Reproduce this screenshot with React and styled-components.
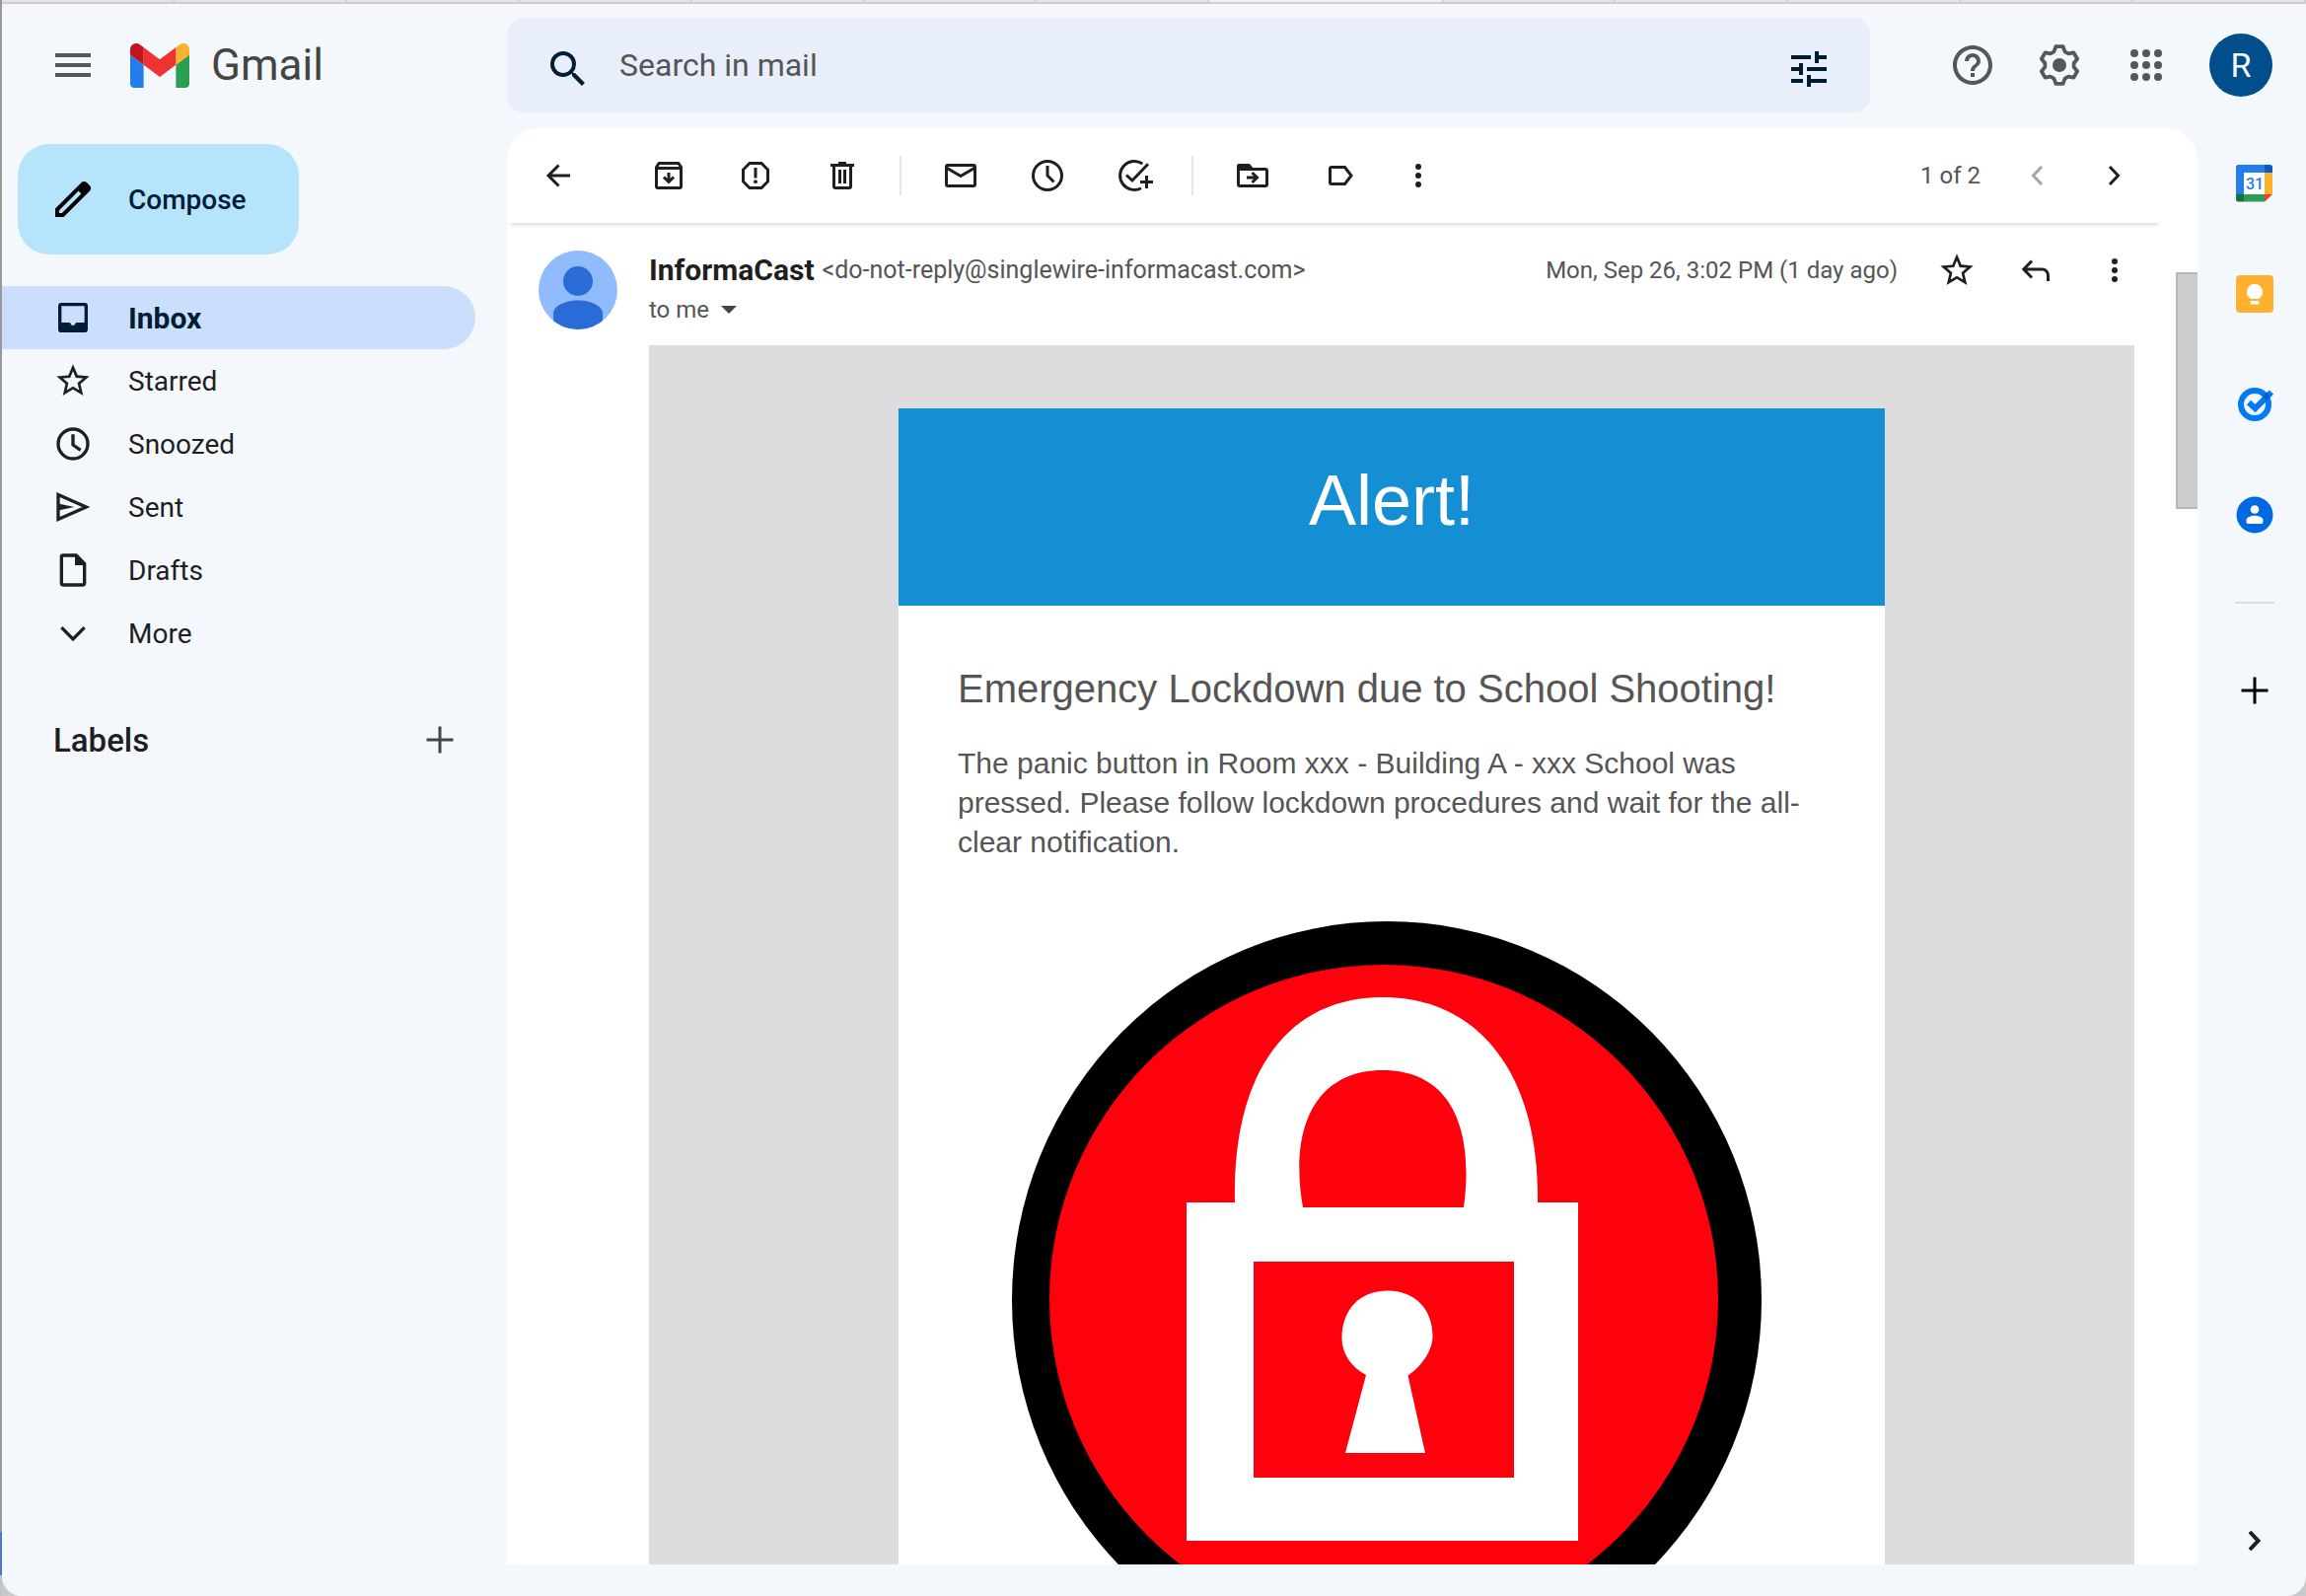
import React from "react";
import styled, { createGlobalStyle } from "styled-components";
import { MdHelpOutline, MdMenu, MdSearch, MdTune } from "react-icons/md";

const color = {
  canvas: "#f4f8fd",
  ink: "#1f1f1f",
  navy: "#001d35",
  muted: "#555555",
  icon: "#55575c",
  line: "#e4e4e9",
};

const GlobalStyle = createGlobalStyle`
  *, *::before, *::after { box-sizing: border-box; }
  body {
    margin: 0;
    background: #c9c9c9;
    font-family: Roboto, "Liberation Sans", sans-serif;
    color: ${color.ink};
  }
  button {
    margin: 0;
    padding: 0;
    border: 0;
    background: none;
    font: inherit;
    color: inherit;
    cursor: pointer;
  }
  a { color: inherit; text-decoration: none; }
  h1, h2, p, ul { margin: 0; padding: 0; }
  svg { display: block; flex: none; }
`;

/* ---------- window ---------- */

const Desktop = styled.div`
  height: 100vh;
  padding-left: 2px;
  display: flex;
  flex-direction: column;
  background: linear-gradient(#999999 0 96%, #5478bc 96% 98.7%, #c4c4c4 98.7%);
`;

const TabStrip = styled.div`
  display: flex;
  height: 4px;
  flex: none;
  border-bottom: 2px solid #cfcdd3;
`;

const Tab = styled.div`
  flex: ${(p) => (p.$active ? 1.36 : 1)};
  background: ${(p) => (p.$active ? "#f6f3f8" : "#e6e2e8")};
  border-right: 2px solid #d2cfd5;
`;

const Backdrop = styled.div`
  flex: 1;
  min-height: 0;
  display: flex;
  background: #c9c9c9;
`;

const Window = styled.div`
  flex: 1;
  min-width: 0;
  display: flex;
  flex-direction: column;
  background: ${color.canvas};
  border-radius: 0 0 20px 20px;
  overflow: hidden;
`;

const Header = styled.header`
  display: flex;
  align-items: center;
  flex: none;
  padding: 14px 0 16px;
`;

const Columns = styled.div`
  flex: 1;
  min-height: 0;
  display: flex;
`;

/* ---------- header ---------- */

const Brand = styled.div`
  width: 512px;
  flex: none;
  display: flex;
  align-items: center;
  padding-left: 48px;
`;

const IconButton = styled.button`
  display: flex;
  align-items: center;
  justify-content: center;
  flex: none;
  width: ${(p) => p.$size || 40}px;
  height: ${(p) => p.$size || 40}px;
  color: ${(p) => p.$color || color.ink};
`;

const BrandLink = styled.a`
  display: flex;
  align-items: center;
  gap: 22px;
  margin-left: 34px;
  font-size: 44px;
  line-height: 52px;
  color: #444444;
`;

const SearchBar = styled.form`
  flex: 1;
  min-width: 0;
  height: 96px;
  display: flex;
  align-items: center;
  gap: 28px;
  padding: 0 38px;
  border-radius: 16px;
  background: #e8effa;
`;

const SearchButton = styled(IconButton)`
  height: 56px;
  padding-top: 8px;
`;

const SearchInput = styled.input`
  flex: 1;
  min-width: 0;
  padding: 0;
  border: 0;
  outline: 0;
  background: none;
  font: inherit;
  font-size: 32px;
  line-height: 40px;
  color: ${color.ink};
  &::placeholder { color: ${color.muted}; opacity: 1; }
`;

const HeaderTools = styled.div`
  flex: none;
  display: flex;
  align-items: center;
  gap: 40px;
  padding: 0 34px 0 80px;
`;

const Account = styled.button`
  width: 64px;
  height: 64px;
  border-radius: 50%;
  && { background: #004e8c; color: #ffffff; font-size: 34px; }
`;

/* ---------- sidebar ---------- */

const Sidebar = styled.aside`
  width: 512px;
  flex: none;
  padding: 16px 32px 0 0;
`;

const Compose = styled.button`
  && {
    display: flex;
    align-items: center;
    gap: 32px;
    min-width: 285px;
    height: 112px;
    margin: 0 0 32px 16px;
    padding: 0 48px 0 32px;
    border-radius: 32px;
    background: #b6e4fd;
    color: ${color.navy};
    font-size: 28px;
    font-weight: 500;
  }
`;

const FolderList = styled.ul`
  list-style: none;
`;

const FolderLink = styled.a`
  display: flex;
  align-items: center;
  gap: 36px;
  height: 64px;
  padding-left: 52px;
  border-radius: 0 32px 32px 0;
  font-size: ${(p) => (p.$active ? 30 : 28)}px;
  font-weight: ${(p) => (p.$active ? 700 : 400)};
  color: ${(p) => (p.$active ? color.navy : color.ink)};
  background: ${(p) => (p.$active ? "#cbdefb" : "transparent")};
`;

const LabelsRow = styled.div`
  display: flex;
  align-items: center;
  justify-content: space-between;
  height: 64px;
  margin-top: 44px;
  padding: 0 16px 0 52px;
`;

const LabelsTitle = styled.h2`
  font-size: 33px;
  font-weight: 500;
`;

/* ---------- mail panel ---------- */

const Panel = styled.main`
  position: relative;
  flex: 1;
  min-width: 0;
  margin-bottom: 32px;
  display: flex;
  flex-direction: column;
  background: #ffffff;
  border-radius: 32px 32px 0 0;
  overflow: hidden;
`;

const Toolbar = styled.div`
  flex: none;
  height: 96px;
  margin-right: 36px;
  padding: 0 28px 0 32px;
  display: flex;
  align-items: center;
  box-shadow: 0 6px 4px -4px rgba(0, 0, 0, 0.16);
`;

const ToolGroup = styled.div`
  display: flex;
  align-items: center;
  gap: 48px;
  margin-left: ${(p) => p.$left || 0}px;
`;

const ToolDivider = styled.span`
  width: 2px;
  height: 40px;
  margin: 0 40px 0 38px;
  background: ${color.line};
`;

const Pager = styled.div`
  display: flex;
  align-items: center;
  gap: 38px;
  margin-left: auto;
  font-size: 24px;
  color: ${color.muted};
`;

const Message = styled.article`
  flex: 1;
  min-height: 0;
  display: grid;
  grid-template-columns: 80px minmax(0, 1fr);
  column-gap: 32px;
  padding: 28px 64px 0 32px;
  overflow: hidden;
`;

const MessageMain = styled.div`
  display: flex;
  flex-direction: column;
  min-height: 0;
`;

const MessageHead = styled.div`
  display: flex;
  justify-content: space-between;
  flex: none;
  margin-bottom: 16px;
  font-size: 24px;
  line-height: 40px;
  color: ${color.muted};
`;

const SenderLine = styled.div`
  display: flex;
  align-items: center;
  gap: 8px;
  height: 40px;
`;

const Sender = styled.strong`
  font-size: 30px;
  font-weight: 700;
  color: ${color.ink};
`;

const Address = styled.span`
  font-size: 25px;
`;

const Recipient = styled.button`
  && {
    display: flex;
    align-items: center;
    gap: 12px;
    height: 40px;
    line-height: 40px;
  }
`;

const MessageTools = styled.div`
  display: flex;
  align-items: center;
  gap: 40px;
  height: 40px;
`;

const MailBody = styled.div`
  flex: 1;
  min-height: 0;
  padding-top: 64px;
  background: #dddddd;
  overflow: hidden;
  font-family: "Liberation Sans", Arial, sans-serif;
`;

const Card = styled.section`
  max-width: 1000px;
  margin: 0 auto;
  background: #ffffff;
  color: ${color.muted};
`;

const Banner = styled.h1`
  padding: 48px 0 62px;
  background: #158fd3;
  color: #ffffff;
  text-align: center;
  font-size: 72px;
  font-weight: 400;
  line-height: 90px;
`;

const CardContent = styled.div`
  display: flex;
  flex-direction: column;
  padding: 60px;
`;

const CardTitle = styled.h2`
  margin-bottom: 32px;
  font-size: 40px;
  font-weight: 400;
  line-height: 48px;
`;

const CardText = styled.p`
  margin-bottom: 60px;
  font-size: 30px;
  line-height: 40px;
`;

const ScrollThumb = styled.div`
  position: absolute;
  top: 146px;
  right: 0;
  width: 22px;
  height: 240px;
  background: #cccccc;
  border: 2px solid #b6b6b6;
  border-right: 0;
`;

/* ---------- side rail ---------- */

const Rail = styled.nav`
  width: 110px;
  flex: none;
  display: flex;
  flex-direction: column;
  align-items: center;
  padding: 36px 0 36px 6px;
`;

const RailApps = styled.div`
  display: flex;
  flex-direction: column;
  gap: 72px;
`;

const RailDivider = styled.span`
  width: 40px;
  height: 2px;
  margin: 68px 0;
  background: #dadddd;
`;

const RailToggle = styled(IconButton)`
  margin-top: auto;
`;

/* ---------- drawings ---------- */

const Glyph = ({ size = 40, box = 40, width = 3, children }) => (
  <svg
    width={size}
    height={size}
    viewBox={`0 0 ${box} ${box}`}
    fill="none"
    stroke="currentColor"
    strokeWidth={width}
    aria-hidden="true"
  >
    {children}
  </svg>
);

const Solid = ({ children }) => (
  <g fill="currentColor" stroke="none">{children}</g>
);

const GmailMark = () => (
  <svg width="60" height="45" viewBox="52 42 88 66" aria-hidden="true">
    <path fill="#237ded" d="M58 108h14V74L52 59v43c0 3.32 2.69 6 6 6" />
    <path fill="#2b9f51" d="M120 108h14c3.32 0 6-2.69 6-6V59l-20 15" />
    <path fill="#ffb12c" d="M120 48v26l20-15v-8c0-7.42-8.47-11.65-14.4-7.2" />
    <path fill="#ee3333" d="M72 74V48l24 18 24-18v26L96 92" />
    <path fill="#c2151e" d="M52 51v8l20 15V48l-5.6-4.2c-5.94-4.45-14.4-.22-14.4 7.2" />
  </svg>
);

const PencilIcon = () => (
  <svg width="48" height="48" viewBox="0 0 24 24" fill="#000000" aria-hidden="true">
    <path
      fillRule="evenodd"
      d="M3 21v-4.25L16.2 3.58q.3-.28.66-.43T17.63 3t.77.15.65.45L20.43 5q.29.28.43.65T21 6.4q0 .4-.14.76t-.43.67L7.25 21zM5 19h1.42L16.2 9.23 14.8 7.8 5 17.6z"
    />
  </svg>
);

/* Six teeth, each a pair of rim points between two body points. */
const gearPoints = [0, 60, 120, 180, 240, 300]
  .flatMap((tooth) => [[-22, 7.4], [-11, 9.6], [11, 9.6], [22, 7.4]].map(([turn, radius]) => {
    const angle = ((tooth + turn) * Math.PI) / 180;
    return `${(12 + radius * Math.sin(angle)).toFixed(2)},${(12 - radius * Math.cos(angle)).toFixed(2)}`;
  }))
  .join(" ");

const GearIcon = () => (
  <Glyph size={48} box={24} width={1.9}>
    <polygon points={gearPoints} strokeLinejoin="round" />
    <Solid><circle cx="12" cy="12" r="3.5" /></Solid>
  </Glyph>
);

const AppsIcon = () => (
  <svg width="48" height="48" viewBox="0 0 24 24" fill="currentColor" aria-hidden="true">
    {[6, 12, 18].flatMap((y) => [6, 12, 18].map((x) => <circle key={`${x}-${y}`} cx={x} cy={y} r="2" />))}
  </svg>
);

const InboxIcon = () => (
  <Glyph box={24} width={2}>
    <rect x="4" y="4" width="16" height="16" rx="1" />
    <Solid><path d="M4 15h6c.6 0 .5 1.8 2 1.8s1.400-1.800 2-1.800h6v5H4z" /></Solid>
  </Glyph>
);

const StarIcon = () => (
  <Glyph box={24}>
    <Solid>
      <path d="M22 9.240l-7.190-.620L12 2 9.190 8.630 2 9.240l5.460 4.730L5.820 21 12 17.270 18.180 21l-1.630-7.030L22 9.240zM12 15.400l-3.760 2.270 1-4.280-3.320-2.880 4.380-.380L12 6.100l1.710 4.040 4.380.380-3.320 2.880 1 4.280L12 15.400z" />
    </Solid>
  </Glyph>
);

const SnoozeIcon = () => (
  <Glyph box={24} width={2}>
    <circle cx="12" cy="12" r="9" />
    <path d="M12 6.200v6.400l4.600 3.200" />
  </Glyph>
);

const SentIcon = () => (
  <Glyph box={24} width={2}>
    <path d="M3 4.500L20 12 3 19.500z" />
    <Solid><path d="M3 9.900L12.800 12 3 14.100z" /></Solid>
  </Glyph>
);

const DraftIcon = () => (
  <Glyph box={24} width={2}>
    <path d="M6 3h8l5 5v12a1 1 0 0 1-1 1H6a1 1 0 0 1-1-1V4a1 1 0 0 1 1-1z" />
    <Solid><path d="M13.200 3h1.200L19 7.600V9h-5.800z" /></Solid>
  </Glyph>
);

const MoreIcon = () => (
  <Glyph box={24} width={2}><path d="M5 8.500l7 7 7-7" /></Glyph>
);

const PlusIcon = () => (
  <Glyph><path d="M20 6.500v27M6.500 20h27" /></Glyph>
);

const BackIcon = () => (
  <Glyph><path d="M32 20H10.500M20.500 9.500L10 20l10.500 10.500" /></Glyph>
);

const ArchiveIcon = () => (
  <Glyph>
    <path d="M7.500 11.500l2.500-4h20l2.500 4V31a1.500 1.500 0 0 1-1.500 1.500H9A1.500 1.500 0 0 1 7.500 31zM7.500 12.500h25" strokeLinejoin="round" />
    <path d="M20 17v9M15 21.500l5 5 5-5" />
  </Glyph>
);

const SpamIcon = () => (
  <Glyph>
    <path d="M14 7.500h12l6.500 6.500v12L26 32.500H14L7.500 26V14z" />
    <path d="M20 12v10.500" />
    <Solid><circle cx="20" cy="26.200" r="1.900" /></Solid>
  </Glyph>
);

const TrashIcon = () => (
  <Glyph>
    <path d="M8 9.500h24M11.500 9.500V31a1.500 1.500 0 0 0 1.500 1.500h14a1.500 1.500 0 0 0 1.500-1.500V9.500M17.500 14v14M22.500 14v14" />
    <path d="M16 7.500h8" />
  </Glyph>
);

const MailIcon = () => (
  <Glyph>
    <rect x="5.500" y="9.500" width="29" height="21" rx="1.500" />
    <path d="M5.500 12L20 20.500 34.500 12" />
  </Glyph>
);

const ClockIcon = () => (
  <Glyph>
    <circle cx="20" cy="20" r="14.500" />
    <path d="M20 10v10l6.500 6.500" />
  </Glyph>
);

const AddTaskIcon = () => (
  <Glyph>
    <path d="M28.300 8A14.500 14.500 0 1 0 27 32.700M12 19.500l6 5.500L34 8.300" />
    <path d="M32.500 20v13M26 26.500h13" />
  </Glyph>
);

const MoveIcon = () => (
  <Glyph>
    <path d="M5.500 11v18A1.500 1.500 0 0 0 7 30.500h26a1.500 1.500 0 0 0 1.500-1.500V15a1.500 1.500 0 0 0-1.500-1.500H5.500" />
    <Solid><path d="M4 14v-4a2 2 0 0 1 2-2h11l4 5v1z" /></Solid>
    <path d="M14 22h10M19.500 17l5 5-5 5" />
  </Glyph>
);

const LabelIcon = () => (
  <Glyph>
    <path d="M12 11.500h13.500l6.500 8.500-6.500 8.500H12a1.500 1.500 0 0 1-1.500-1.500V13a1.500 1.500 0 0 1 1.500-1.500z" />
  </Glyph>
);

const KebabIcon = () => (
  <Glyph>
    <Solid>
      <circle cx="20" cy="11" r="3" />
      <circle cx="20" cy="20" r="3" />
      <circle cx="20" cy="29" r="3" />
    </Solid>
  </Glyph>
);

const PrevIcon = () => (
  <Glyph><path d="M24 11L15.500 20l8.500 9" /></Glyph>
);

const NextIcon = ({ width }) => (
  <Glyph width={width}><path d="M15 11l8.500 9-8.500 9" /></Glyph>
);

const ReplyIcon = () => (
  <Glyph><path d="M16 10.500L7.800 19l8.200 8.500M8 19h18.500a6 6 0 0 1 6 6v6" /></Glyph>
);

const CaretIcon = () => (
  <svg width="16" height="8" viewBox="0 0 16 8" fill="#444444" aria-hidden="true">
    <path d="M0 0h16L8 8z" />
  </svg>
);

const PersonAvatar = () => (
  <svg width="80" height="80" viewBox="0 0 80 80" role="img" aria-label="InformaCast">
    <clipPath id="avatar-disc"><circle cx="40" cy="40" r="40" /></clipPath>
    <g clipPath="url(#avatar-disc)">
      <rect width="80" height="80" fill="#90bbfc" />
      <circle cx="40" cy="31" r="15" fill="#2a6bd7" />
      <path d="M15 80V64c0-8 12-13.500 25-13.500S65 56 65 64v16z" fill="#2a6bd7" />
    </g>
  </svg>
);

const CalendarIcon = () => (
  <svg width="38" height="38" viewBox="0 0 38 38" aria-hidden="true">
    <path d="M2.500 0H30v8H8v22H0V2.500A2.500 2.500 0 0 1 2.500 0z" fill="#237ded" />
    <path d="M29 0h5.500A2.500 2.500 0 0 1 37 2.500V8h-8z" fill="#0b5bc4" />
    <path d="M29 8h8v22h-8z" fill="#ffb12c" />
    <path d="M8 30h21v7.500H8z" fill="#2b9f51" />
    <path d="M0 30h8v7.500H2.500A2.500 2.500 0 0 1 0 35z" fill="#13733a" />
    <path d="M29 30h8l-8 7.500z" fill="#f23a33" />
    <path d="M8 8h21v22H8z" fill="#ffffff" />
    <text x="19" y="25" textAnchor="middle" fontSize="16" fontWeight="500" fill="#237ded">31</text>
  </svg>
);

const KeepIcon = () => (
  <svg width="38" height="38" viewBox="0 0 38 38" aria-hidden="true">
    <rect width="38" height="38" rx="4" fill="#ffb02e" />
    <path d="M19 9a8 8 0 0 1 4.500 14.600V24h-9v-.400A8 8 0 0 1 19 9zM14.700 26h8.600v3.500h-8.600z" fill="#ffffff" />
  </svg>
);

const TasksIcon = () => (
  <svg width="38" height="38" viewBox="0 0 38 38" fill="none" aria-hidden="true">
    <circle cx="19" cy="19" r="14" stroke="#007bf8" strokeWidth="6" />
    <path d="M13 17l6.500 6L36 6.500" stroke="#007bf8" strokeWidth="6" />
    <path d="M27 11l4-4.500 3.500 5-4 3.500z" fill="#0059c9" />
  </svg>
);

const ContactsIcon = () => (
  <svg width="38" height="38" viewBox="0 0 38 38" aria-hidden="true">
    <circle cx="19" cy="19" r="18.500" fill="#0069e0" />
    <circle cx="19" cy="13.500" r="4.300" fill="#ffffff" />
    <path d="M10.500 24.500c0-3.200 4.500-4.800 8.500-4.800s8.500 1.600 8.500 4.800v1.500a2 2 0 0 1-2 2h-13a2 2 0 0 1-2-2z" fill="#ffffff" />
  </svg>
);

const LockdownSign = () => (
  <svg viewBox="0 0 880 780" role="img" aria-label="Lockdown">
    <ellipse cx="435" cy="384" rx="380" ry="384" fill="#000000" />
    <ellipse cx="432" cy="383" rx="339" ry="339" fill="#ff000d" />
    <path
      fill="#ffffff"
      fillRule="evenodd"
      d="M232 285h49C278 160 330 77 431 77S590 160 588 285h41v343H232zM350 290h163C524 210 500 151 431 151S336 210 350 290zM300 345v219h264V345z"
    />
    <path
      fill="#ffffff"
      d="M436 374.500c28 0 45.500 19 45.500 46 0 15-11.500 31-25 40L474 539h-81l21-79c-15-8-24.500-22-24.500-37 0-29 17.500-48.500 46.500-48.500z"
    />
  </svg>
);

/* ---------- page ---------- */

const tabs = Array.from({ length: 13 }, (_, i) => i);

const folders = [
  { name: "Inbox", Icon: InboxIcon, active: true },
  { name: "Starred", Icon: StarIcon },
  { name: "Snoozed", Icon: SnoozeIcon },
  { name: "Sent", Icon: SentIcon },
  { name: "Drafts", Icon: DraftIcon },
  { name: "More", Icon: MoreIcon },
];

const railApps = [
  { name: "Calendar", Icon: CalendarIcon },
  { name: "Keep", Icon: KeepIcon },
  { name: "Tasks", Icon: TasksIcon },
  { name: "Contacts", Icon: ContactsIcon },
];

const Tool = ({ name, Icon, ...rest }) => (
  <IconButton type="button" aria-label={name} {...rest}>
    <Icon />
  </IconButton>
);

export default function App() {
  return (
    <Desktop>
      <GlobalStyle />
      <TabStrip>
        {tabs.map((i) => <Tab key={i} $active={i === 7} />)}
      </TabStrip>
      <Backdrop>
        <Window>
          <Header>
            <Brand>
              <IconButton type="button" aria-label="Main menu" $size={48} $color={color.icon}>
                <MdMenu size={48} />
              </IconButton>
              <BrandLink href="#inbox"><GmailMark />Gmail</BrandLink>
            </Brand>
            <SearchBar role="search">
              <SearchButton type="submit" aria-label="Search" $size={48} $color={color.navy}>
                <MdSearch size={48} />
              </SearchButton>
              <SearchInput type="text" aria-label="Search in mail" placeholder="Search in mail" />
              <SearchButton type="button" aria-label="Search options" $size={48} $color={color.navy}>
                <MdTune size={48} />
              </SearchButton>
            </SearchBar>
            <HeaderTools>
              <IconButton type="button" aria-label="Support" $size={48} $color={color.icon}>
                <MdHelpOutline size={48} />
              </IconButton>
              <Tool name="Settings" Icon={GearIcon} $size={48} $color={color.icon} />
              <Tool name="Google apps" Icon={AppsIcon} $size={48} $color={color.icon} />
              <Account type="button">R</Account>
            </HeaderTools>
          </Header>

          <Columns>
            <Sidebar>
              <Compose type="button"><PencilIcon />Compose</Compose>
              <FolderList>
                {folders.map(({ name, Icon, active }) => (
                  <li key={name}>
                    <FolderLink href={`#${name.toLowerCase()}`} $active={active}>
                      <Icon />
                      {name}
                    </FolderLink>
                  </li>
                ))}
              </FolderList>
              <LabelsRow>
                <LabelsTitle>Labels</LabelsTitle>
                <Tool name="Create new label" Icon={PlusIcon} $color="#444444" />
              </LabelsRow>
            </Sidebar>

            <Panel>
              <Toolbar>
                <Tool name="Back to Inbox" Icon={BackIcon} />
                <ToolGroup $left={72}>
                  <Tool name="Archive" Icon={ArchiveIcon} />
                  <Tool name="Report spam" Icon={SpamIcon} />
                  <Tool name="Delete" Icon={TrashIcon} />
                </ToolGroup>
                <ToolDivider />
                <ToolGroup>
                  <Tool name="Mark as unread" Icon={MailIcon} />
                  <Tool name="Snooze" Icon={ClockIcon} />
                  <Tool name="Add to Tasks" Icon={AddTaskIcon} />
                </ToolGroup>
                <ToolDivider />
                <ToolGroup>
                  <Tool name="Move to" Icon={MoveIcon} />
                  <Tool name="Labels" Icon={LabelIcon} />
                </ToolGroup>
                <ToolGroup $left={40}>
                  <Tool name="More" Icon={KebabIcon} />
                </ToolGroup>
                <Pager>
                  <span>1 of 2</span>
                  <Tool name="Newer" Icon={PrevIcon} $color="#a5a5a5" />
                  <Tool name="Older" Icon={NextIcon} />
                </Pager>
              </Toolbar>

              <Message>
                <PersonAvatar />
                <MessageMain>
                  <MessageHead>
                    <div>
                      <SenderLine>
                        <Sender>InformaCast</Sender>
                        <Address>&lt;do-not-reply@singlewire-informacast.com&gt;</Address>
                      </SenderLine>
                      <Recipient type="button">to me<CaretIcon /></Recipient>
                    </div>
                    <MessageTools>
                      <time>Mon, Sep 26, 3:02 PM (1 day ago)</time>
                      <Tool name="Star" Icon={StarIcon} />
                      <Tool name="Reply" Icon={ReplyIcon} />
                      <Tool name="More options" Icon={KebabIcon} />
                    </MessageTools>
                  </MessageHead>
                  <MailBody>
                    <Card>
                      <Banner>Alert!</Banner>
                      <CardContent>
                        <CardTitle>Emergency Lockdown due to School Shooting!</CardTitle>
                        <CardText>
                          The panic button in Room xxx - Building A - xxx School was pressed. Please
                          follow lockdown procedures and wait for the all-clear notification.
                        </CardText>
                        <LockdownSign />
                      </CardContent>
                    </Card>
                  </MailBody>
                </MessageMain>
              </Message>
              <ScrollThumb />
            </Panel>

            <Rail aria-label="Side panel">
              <RailApps>
                {railApps.map(({ name, Icon }) => <Tool key={name} name={name} Icon={Icon} />)}
              </RailApps>
              <RailDivider />
              <Tool name="Get add-ons" Icon={PlusIcon} $color="#000000" />
              <RailToggle type="button" aria-label="Hide side panel">
                <NextIcon width={4} />
              </RailToggle>
            </Rail>
          </Columns>
        </Window>
      </Backdrop>
    </Desktop>
  );
}
